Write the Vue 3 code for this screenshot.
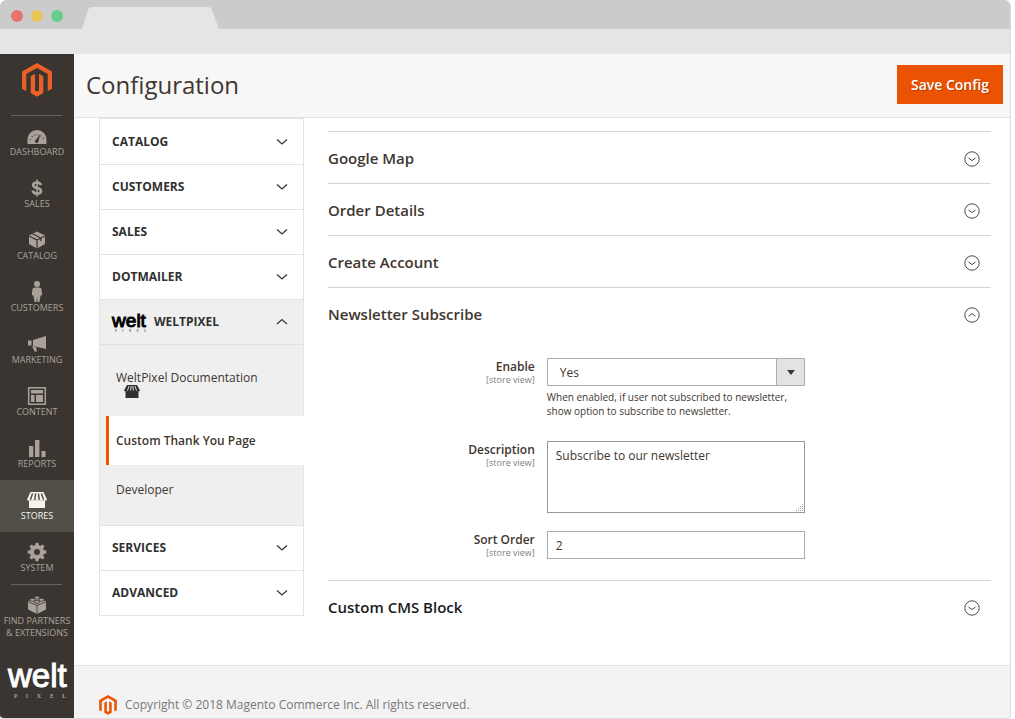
<script setup>
import { ref } from 'vue'

const navItems = [
  { label: 'DASHBOARD', icon: 'gauge' },
  { label: 'SALES', icon: 'dollar' },
  { label: 'CATALOG', icon: 'box' },
  { label: 'CUSTOMERS', icon: 'person' },
  { label: 'MARKETING', icon: 'horn' },
  { label: 'CONTENT', icon: 'layout' },
  { label: 'REPORTS', icon: 'bars' },
  { label: 'STORES', icon: 'store', active: true },
  { label: 'SYSTEM', icon: 'gear' },
  { label: 'FIND PARTNERS & EXTENSIONS', icon: 'brick', divided: true }
]

const tabsBefore = ['CATALOG', 'CUSTOMERS', 'SALES', 'DOTMAILER']
const tabsAfter = ['SERVICES', 'ADVANCED']
const closedSections = ['Google Map', 'Order Details', 'Create Account']

const enabled = ref('Yes')
const description = ref('Subscribe to our newsletter')
const sortOrder = ref('2')
</script>

<template>
  <div class="browser">
    <div class="tabstrip">
      <span class="dot red"></span>
      <span class="dot yellow"></span>
      <span class="dot green"></span>
      <svg class="tab" width="137" height="22" viewBox="0 0 137 22" aria-hidden="true">
        <path d="M0 22 L6 3 Q7 0 10 0 H126 Q129 0 130 3 L137 22 Z" fill="#e5e5e5" />
      </svg>
    </div>
    <div class="toolbar"></div>

    <div class="admin">
      <nav class="sidebar" aria-label="Main">
        <a class="brand" href="#" aria-label="Magento">
          <svg width="30" height="34" viewBox="0 0 30 34" fill="#eb5f28" aria-hidden="true">
            <path d="M15 0 L30 8.6 V25.8 L25.7 28.2 V11.1 L15 5 L4.3 11.1 V28.2 L0 25.8 V8.6 Z" />
            <path d="M8.7 13.3 L13 10.8 V27.4 L15 28.6 L17 27.4 V10.8 L21.3 13.3 V30 L15 33.7 L8.7 30 Z" />
          </svg>
        </a>
        <ul class="menu">
          <li v-for="item in navItems" :key="item.label" :class="{ divided: item.divided }">
            <a href="#" class="menu-link" :class="{ active: item.active }">
              <svg class="menu-icon" width="24" height="22" viewBox="0 0 24 22" aria-hidden="true">
                <g v-if="item.icon === 'gauge'">
                  <path d="M2.5 19 V14.5 A9.5 9.5 0 0 1 21.5 14.5 V19 Z" fill="currentColor" />
                  <path d="M5.3 15 A6.9 6.9 0 0 1 18.7 15" fill="none" stroke="#3a3531" stroke-width="1.2" stroke-dasharray="1 2.2" />
                  <path d="M15.6 9 L13.4 16 A1.7 1.7 0 1 1 11 14.8 Z" fill="#3a3531" />
                </g>
                <g v-else-if="item.icon === 'dollar'" fill="none" stroke="currentColor">
                  <path d="M16 8.2 C15.4 6.2 14 5.5 12 5.5 C9.8 5.5 8.2 6.4 8.2 8.2 C8.2 12 16 10 16 13.9 C16 15.7 14.3 16.6 12 16.6 C9.5 16.6 8.1 15.5 7.7 13.4" stroke-width="2.6" />
                  <path d="M12 2.5 V19.5" stroke-width="1.6" />
                </g>
                <g v-else-if="item.icon === 'box'">
                  <path d="M12 2.5 L20 6.5 V15 L12 19.5 L4 15 V6.5 Z" fill="currentColor" />
                  <path d="M4 7 L12 11 L20 7 M12 11 V20 M7.5 4.8 L15.8 9 V12" fill="none" stroke="#3a3531" stroke-width="1.2" />
                </g>
                <g v-else-if="item.icon === 'person'" fill="currentColor">
                  <circle cx="12" cy="3" r="3" />
                  <path d="M9.4 6.6 H14.6 Q16.3 6.8 16.6 8.6 L17.2 14 L15.6 14.6 L14.4 21 H12.5 L12 16 L11.5 21 H9.6 L8.4 14.6 L6.8 14 L7.4 8.6 Q7.7 6.8 9.4 6.6 Z" />
                </g>
                <g v-else-if="item.icon === 'horn'" fill="currentColor">
                  <path d="M8 7 L21 3 V16 L8 13 Z" />
                  <path d="M3 7.5 H6.5 V12.5 H3 Z M7 13 L11 14 L12 18.5 H9.5 Z" />
                </g>
                <g v-else-if="item.icon === 'layout'">
                  <path d="M3.7 2.7 H20.3 V19.3 H3.7 Z" fill="none" stroke="currentColor" stroke-width="1.5" />
                  <path d="M6 5 H18 V8.5 H6 Z M6 10 H9.5 V17 H6 Z M11 10 H18 V17 H11 Z" fill="currentColor" />
                </g>
                <g v-else-if="item.icon === 'bars'" fill="currentColor">
                  <path d="M4 9 H8.3 V20 H4 Z M10 3 H14.4 V20 H10 Z M16.5 14 H20.5 V20 H16.5 Z" />
                </g>
                <g v-else-if="item.icon === 'store'" fill="currentColor">
                  <path d="M5.5 3 H18.5 L22 10.5 Q20.5 12.5 18.6 11.2 Q17 12.5 15.3 11.2 Q13.6 12.5 12 11.2 Q10.4 12.5 8.7 11.2 Q7 12.5 5.4 11.2 Q3.5 12.5 2 10.5 Z" />
                  <path d="M4 11.5 H20 V19 H4 Z" />
                  <path d="M7.6 4.5 L5.4 10.8 M10.6 4.5 L9.8 10.8 M13.4 4.5 L14.2 10.8 M16.4 4.5 L18.6 10.8" stroke="#524e48" stroke-width="1.5" />
                </g>
                <g v-else-if="item.icon === 'gear'">
                  <circle cx="12" cy="11" r="5" fill="none" stroke="currentColor" stroke-width="4" />
                  <path
                    v-for="n in 8"
                    :key="n"
                    d="M10 5 L10.6 1.7 H13.4 L14 5 Z"
                    fill="currentColor"
                    :transform="`rotate(${n * 45} 12 11)`"
                  />
                </g>
                <g v-else>
                  <path d="M3 7.2 L12 3.4 L21 7.2 V15.6 L12 20 L3 15.6 Z" fill="currentColor" />
                  <path d="M3 7.6 L12 11.6 L21 7.6 M12 11.6 V20" fill="none" stroke="#3a3531" stroke-width="0.8" />
                  <g fill="currentColor" stroke="#3a3531" stroke-width="0.8">
                    <ellipse cx="12" cy="3.6" rx="2.6" ry="1.5" />
                    <ellipse cx="7.4" cy="5.8" rx="2.6" ry="1.5" />
                    <ellipse cx="16.6" cy="5.8" rx="2.6" ry="1.5" />
                    <ellipse cx="12" cy="8" rx="2.6" ry="1.5" />
                  </g>
                </g>
              </svg>
              <span>{{ item.label }}</span>
            </a>
          </li>
        </ul>
        <a class="welt welt-large" href="#" aria-label="WeltPixel">
          <span class="welt-word">welt</span>
          <span class="welt-sub"><span v-for="c in 'PIXEL'" :key="c">{{ c }}</span></span>
        </a>
      </nav>

      <div class="page">
        <header class="page-header">
          <h1>Configuration</h1>
          <button type="button" class="save">Save Config</button>
        </header>

        <div class="columns">
          <nav class="config-nav" aria-label="Configuration sections">
            <button v-for="tab in tabsBefore" :key="tab" type="button" class="group">
              <span>{{ tab }}</span>
              <svg width="12" height="8" viewBox="0 0 12 8" aria-hidden="true"><path d="M1 1.5 L6 6 L11 1.5" /></svg>
            </button>
            <button type="button" class="group open" aria-expanded="true">
              <span class="welt welt-small">
                <span class="welt-word">welt</span>
                <span class="welt-sub"><span v-for="c in 'PIXEL'" :key="c">{{ c }}</span></span>
              </span>
              <span>WELTPIXEL</span>
              <svg width="12" height="8" viewBox="0 0 12 8" aria-hidden="true"><path d="M1 6 L6 1.5 L11 6" /></svg>
            </button>
            <div class="subnav">
              <a href="#" class="doc">
                WeltPixel Documentation
                <svg width="16" height="13" viewBox="0 0 16 13" aria-hidden="true">
                  <path d="M3 0 H13 L16 5.5 Q15 7 13.5 6 V6.6 H2.5 V6 Q1 7 0 5.5 Z M1.5 6.5 H14.5 V13 H1.5 Z" fill="#303030" />
                  <path d="M5 1 L3.5 5.5 M7.2 1 L6.6 5.5 M8.8 1 L9.4 5.5 M11 1 L12.5 5.5" stroke="#efefef" stroke-width="0.9" />
                </svg>
              </a>
              <a href="#" class="current">Custom Thank You Page</a>
              <a href="#">Developer</a>
            </div>
            <button v-for="tab in tabsAfter" :key="tab" type="button" class="group">
              <span>{{ tab }}</span>
              <svg width="12" height="8" viewBox="0 0 12 8" aria-hidden="true"><path d="M1 1.5 L6 6 L11 1.5" /></svg>
            </button>
          </nav>

          <main class="settings">
            <section v-for="name in closedSections" :key="name" class="section">
              <button type="button" class="section-head">
                <span>{{ name }}</span>
                <svg width="16" height="16" viewBox="0 0 16 16" aria-hidden="true"><circle cx="8" cy="8" r="7.2" /><path d="M4.5 7 L8 9.6 L11.5 7" /></svg>
              </button>
            </section>

            <section class="section">
              <button type="button" class="section-head" aria-expanded="true">
                <span>Newsletter Subscribe</span>
                <svg width="16" height="16" viewBox="0 0 16 16" aria-hidden="true"><circle cx="8" cy="8" r="7.2" /><path d="M4.5 9.2 L8 6.6 L11.5 9.2" /></svg>
              </button>
              <form class="fields" @submit.prevent>
                <div class="field">
                  <label for="enable">Enable<small>[store view]</small></label>
                  <div>
                    <div class="select">
                      <select id="enable" v-model="enabled">
                        <option>Yes</option>
                        <option>No</option>
                      </select>
                      <span class="arrow"></span>
                    </div>
                    <p>When enabled, if user not subscribed to newsletter, show option to subscribe to newsletter.</p>
                  </div>
                </div>
                <div class="field">
                  <label for="description">Description<small>[store view]</small></label>
                  <div class="area">
                    <textarea id="description" v-model="description"></textarea>
                    <svg class="grip" width="8" height="8" viewBox="0 0 8 8" fill="#a0a0a0" aria-hidden="true">
                      <path d="M6 0h1v1h-1z M6 2h1v1h-1z M4 2h1v1h-1z M6 4h1v1h-1z M4 4h1v1h-1z M2 4h1v1h-1z M6 6h1v1h-1z M4 6h1v1h-1z M2 6h1v1h-1z M0 6h1v1h-1z" />
                    </svg>
                  </div>
                </div>
                <div class="field">
                  <label for="sort-order">Sort Order<small>[store view]</small></label>
                  <input id="sort-order" v-model="sortOrder" type="text" />
                </div>
              </form>
            </section>

            <section class="section">
              <button type="button" class="section-head dark">
                <span>Custom CMS Block</span>
                <svg width="16" height="16" viewBox="0 0 16 16" aria-hidden="true"><circle cx="8" cy="8" r="7.2" /><path d="M4.5 7 L8 9.6 L11.5 7" /></svg>
              </button>
            </section>
          </main>
        </div>

        <footer class="footer">
          <svg width="18" height="20" viewBox="0 0 30 34" fill="#eb5202" aria-hidden="true">
            <path d="M15 0 L30 8.6 V25.8 L25.7 28.2 V11.1 L15 5 L4.3 11.1 V28.2 L0 25.8 V8.6 Z" />
            <path d="M8.7 13.3 L13 10.8 V27.4 L15 28.6 L17 27.4 V10.8 L21.3 13.3 V30 L15 33.7 L8.7 30 Z" />
          </svg>
          <span>Copyright © 2018 Magento Commerce Inc. All rights reserved.</span>
        </footer>
      </div>
    </div>
  </div>
</template>

<style>
body {
  background: #fff;
}
</style>

<style scoped>
* {
  box-sizing: border-box;
}

.browser {
  display: flex;
  flex-direction: column;
  min-height: 100vh;
  margin-right: 4px;
  overflow: hidden;
  border: 1px solid #dcdcdc;
  border-top: 0;
  border-left: 0;
  border-radius: 6px 6px 4px 4px;
  font-family: "Open Sans", sans-serif;
  font-size: 12px;
  color: #41362f;
}

.browser a {
  color: inherit;
  text-decoration: none;
}

.browser button {
  margin: 0;
  border: 0;
  font-family: inherit;
  cursor: pointer;
}

.tabstrip {
  display: flex;
  align-items: center;
  gap: 8px;
  height: 29px;
  padding: 2px 0 0 11px;
  background: #cbcbcb;
}

.dot {
  width: 12px;
  height: 12px;
  border-radius: 50%;
}

.red {
  background: #e4756d;
}

.yellow {
  background: #e6c657;
}

.green {
  background: #67cd8f;
}

.tab {
  align-self: flex-end;
  margin-left: 11px;
}

.toolbar {
  height: 25px;
  background: #e5e5e5;
}

.admin {
  display: flex;
  flex: 1;
}

.sidebar {
  flex: none;
  width: 74px;
  background: #3a3531;
  color: #a8a299;
}

.brand {
  display: flex;
  justify-content: center;
  height: 62px;
  margin: 0 12px 0 11px;
  padding-top: 9px;
  border-bottom: 1px solid #66615c;
}

.menu {
  margin: 0;
  padding: 0;
  list-style: none;
}

.menu-link {
  display: flex;
  flex-direction: column;
  align-items: center;
  min-height: 52px;
  padding-top: 9px;
  font-size: 9px;
  line-height: 12px;
  text-align: center;
}

.menu-icon {
  flex: none;
  margin-bottom: -1px;
}

.menu-link.active {
  background: #524e48;
  color: #f7f3eb;
}

.divided::before {
  content: "";
  display: block;
  margin: 0 12px 0 11px;
  border-top: 1px solid #66615c;
}

.welt {
  display: flex;
  flex-direction: column;
}

.welt-word {
  font-family: "Liberation Sans", sans-serif;
}

.welt-sub {
  display: flex;
  justify-content: space-between;
  font-family: "Liberation Serif", serif;
}

.welt-large {
  width: 58px;
  margin: 20px auto 0 8px;
}

.welt-large .welt-word {
  font-size: 33px;
  line-height: 34px;
  color: #fff;
  -webkit-text-stroke: 1px #fff;
}

.welt-large .welt-sub {
  padding: 0 0 0 6px;
  font-size: 6px;
  line-height: 6px;
  color: #c9c5c0;
}

.welt-small {
  width: 34px;
  margin-right: 8px;
  color: #000;
}

.welt-small .welt-word {
  font-size: 19px;
  font-weight: 400;
  line-height: 19px;
  -webkit-text-stroke: 1px #000;
}

.welt-small .welt-sub {
  padding-left: 3px;
  font-size: 3px;
  font-weight: 400;
  line-height: 3px;
}

.page {
  display: flex;
  flex: 1;
  flex-direction: column;
  min-width: 0;
}

.page-header {
  display: flex;
  align-items: center;
  justify-content: space-between;
  min-height: 64px;
  padding: 0 7px 2px 12px;
  border-bottom: 1px solid #e3e3e3;
  background: #f7f7f7;
}

h1 {
  margin: 0;
  font-size: 24px;
  font-weight: 400;
  line-height: 32px;
}

.browser .save {
  padding: 10px 14px;
  background: #eb5202;
  color: #fff;
  font-size: 14px;
  font-weight: 600;
  line-height: 19px;
  text-shadow: 1px 1px 0 rgba(0, 0, 0, 0.25);
}

.columns {
  display: flex;
  flex: 1;
  align-items: flex-start;
  gap: 24px;
  padding: 0 19px 24px 25px;
}

.config-nav {
  flex: none;
  width: 205px;
  border: 1px solid #e3e3e3;
}

.group {
  display: flex;
  align-items: center;
  width: 100%;
  min-height: 45px;
  padding: 0 15px 0 12px;
  background: #fff;
  color: #303030;
  font-size: 12px;
  font-weight: 700;
  line-height: 16px;
}

.group + .group,
.subnav + .group {
  border-top: 1px solid #e3e3e3;
}

.group.open {
  min-height: 46px;
  border-bottom: 1px solid #e0e0e0;
  background: #efefef;
}

.group > svg {
  margin-left: auto;
  fill: none;
  stroke: #41362f;
  stroke-width: 1.3;
}

.subnav {
  padding: 24px 0 11px;
  background: #efefef;
}

.subnav a {
  display: block;
  padding: 16px 8px 16px 16px;
  line-height: 17px;
}

.subnav .doc {
  padding: 0 8px 18px 16px;
}

.doc svg {
  display: block;
  margin: -1px 0 0 8px;
}

.subnav .current {
  margin: 0 -1px 0 6px;
  padding-left: 7px;
  border-left: 3px solid #eb5202;
  background: #fff;
  font-weight: 600;
}

.settings {
  flex: 1;
  min-width: 0;
  padding-top: 13px;
}

.section {
  border-top: 1px solid #d3d3d3;
}

.section-head {
  display: flex;
  align-items: center;
  justify-content: space-between;
  width: 100%;
  min-height: 51px;
  padding: 0 11px 0 0;
  background: none;
  color: #41362f;
  font-size: 15px;
  font-weight: 600;
  line-height: 20px;
}

.section-head.dark {
  color: #1a1a1a;
}

.section-head svg {
  margin-top: 3px;
  fill: none;
  stroke: #514943;
  stroke-width: 1;
}

.fields {
  display: grid;
  gap: 18px;
  padding: 19px 0 21px;
}

.field {
  display: grid;
  grid-template-columns: 33% 39%;
}

label {
  padding: 1px 12px 0 0;
  font-size: 12px;
  font-weight: 600;
  line-height: 16px;
  text-align: right;
}

label small {
  display: block;
  color: #808080;
  font-size: 9px;
  font-weight: 400;
  line-height: 10px;
}

.select,
.area {
  position: relative;
}

select,
textarea,
input {
  display: block;
  width: 100%;
  margin: 0;
  border: 1px solid #adadad;
  border-radius: 0;
  outline: 0;
  background: #fff;
  color: #41362f;
  font-family: inherit;
  font-size: 12px;
}

select {
  height: 28px;
  padding: 0 40px 0 12px;
  appearance: none;
}

.arrow {
  position: absolute;
  top: 1px;
  right: 1px;
  bottom: 1px;
  display: grid;
  place-items: center;
  width: 28px;
  border-left: 1px solid #adadad;
  background: #e3e3e3;
  pointer-events: none;
}

.arrow::before {
  content: "";
  border: 4px solid transparent;
  border-top: 5px solid #41362f;
  border-bottom: 0;
}

.field p {
  margin: 4px 0 5px;
  font-size: 10px;
  line-height: 14px;
}

textarea {
  height: 72px;
  padding: 5px 8px;
  border-color: #989898;
  line-height: 17px;
  resize: none;
}

.grip {
  position: absolute;
  right: 1px;
  bottom: 1px;
}

input {
  height: 28px;
  padding: 0 8px;
}

.footer {
  display: flex;
  align-items: center;
  gap: 8px;
  padding: 29px 25px 3px;
  border-top: 1px solid #e3e3e3;
  background: #f3f3f3;
  color: #777;
  font-size: 12px;
  line-height: 20px;
}
</style>
